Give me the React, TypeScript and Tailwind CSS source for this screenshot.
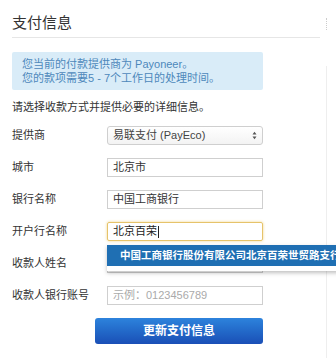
import React from 'react';

const font = { fontFamily: '"Liberation Sans", "Noto Sans CJK SC", sans-serif' };

function Row({ label, children }: { label: string; children: React.ReactNode }) {
  return (
    <div className="flex items-center h-[19px]">
      <div className="w-[95px] shrink-0 text-[11px] text-[#333]">{label}</div>
      <div className="w-[156px] h-full relative">{children}</div>
    </div>
  );
}

export default function App() {
  return (
    <div className="w-[336px] h-[358px] bg-white overflow-hidden flex" style={font}>
      {/* Main panel */}
      <div className="w-[320px] shrink-0 pl-3 pt-[13px] relative z-10">
        <h2 className="text-[15px] leading-[20px] text-[#333] pb-[4px] border-b border-[#e6e6e6]">支付信息</h2>

        <div className="mt-[14px] w-[251px] bg-[#d9ecf8] rounded-[2px] px-[10px] py-[5px] text-[11px] leading-[14px] text-[#4d88bb]">
          <p>您当前的付款提供商为 Payoneer。</p>
          <p>您的款项需要5 - 7个工作日的处理时间。</p>
        </div>

        <p className="mt-[10px] text-[11px] leading-[14px] text-[#333]">请选择收款方式并提供必要的详细信息。</p>

        <div className="mt-[12px] flex flex-col gap-[13px]">
          <Row label="提供商">
            <div className="h-full border border-[#cfcfcf] rounded-[3px] bg-gradient-to-b from-white to-[#f3f3f3] flex items-center justify-between px-[5px] text-[11px] text-[#444]">
              <span>易联支付 (PayEco)</span>
              <svg width="5" height="9" viewBox="0 0 5 9">
                <path d="M0.5 3.5 L2.5 0.8 L4.5 3.5 Z M0.5 5.5 L2.5 8.2 L4.5 5.5 Z" fill="#555" />
              </svg>
            </div>
          </Row>
          <Row label="城市">
            <div className="h-full border border-[#cfcfcf] flex items-center px-[5px] text-[11px] text-[#333]">北京市</div>
          </Row>
          <Row label="银行名称">
            <div className="h-full border border-[#cfcfcf] flex items-center px-[5px] text-[11px] text-[#333]">中国工商银行</div>
          </Row>
          <Row label="开户行名称">
            <div className="h-full border border-[#e6c36a] rounded-[2px] shadow-[0_0_3px_#f0d48a] flex items-center px-[5px] text-[11px] text-[#222]">
              <span>北京百荣</span>
              <span className="w-px h-[12px] bg-[#222] ml-px" />
            </div>
            {/* Autocomplete menu */}
            <div className="absolute left-0 top-[23px] w-[260px] z-10 bg-white shadow-[0_2px_4px_rgba(0,0,0,0.25)] pb-[5px]">
              <div className="h-[21px] bg-[#1f6fb3] flex items-center pl-[13px] text-[10.5px] font-bold text-white whitespace-nowrap">
                中国工商银行股份有限公司北京百荣世贸路支行
              </div>
            </div>
          </Row>
          <Row label="收款人姓名">
            <div className="h-full border border-[#cfcfcf]" />
          </Row>
          <Row label="收款人银行账号">
            <div className="h-full border border-[#cfcfcf] flex items-center px-[5px] text-[11px] text-[#aaa]">示例：0123456789</div>
          </Row>
        </div>

        <div className="mt-[13px] pl-[83px]">
          <button className="w-[168px] h-[26px] rounded-[3px] bg-gradient-to-b from-[#2d83dc] to-[#1b4fb6] text-white text-[12px] font-bold">
            更新支付信息
          </button>
        </div>
      </div>

      {/* Right column edge */}
      <div className="flex-1 pt-[18px] pl-[6px] flex flex-col">
        <div className="w-[2px] h-[12px] border-l border-dotted border-[#ccc]" />
        <div className="mt-[36px] flex-1 border-l border-[#eee]" />
      </div>
    </div>
  );
}
